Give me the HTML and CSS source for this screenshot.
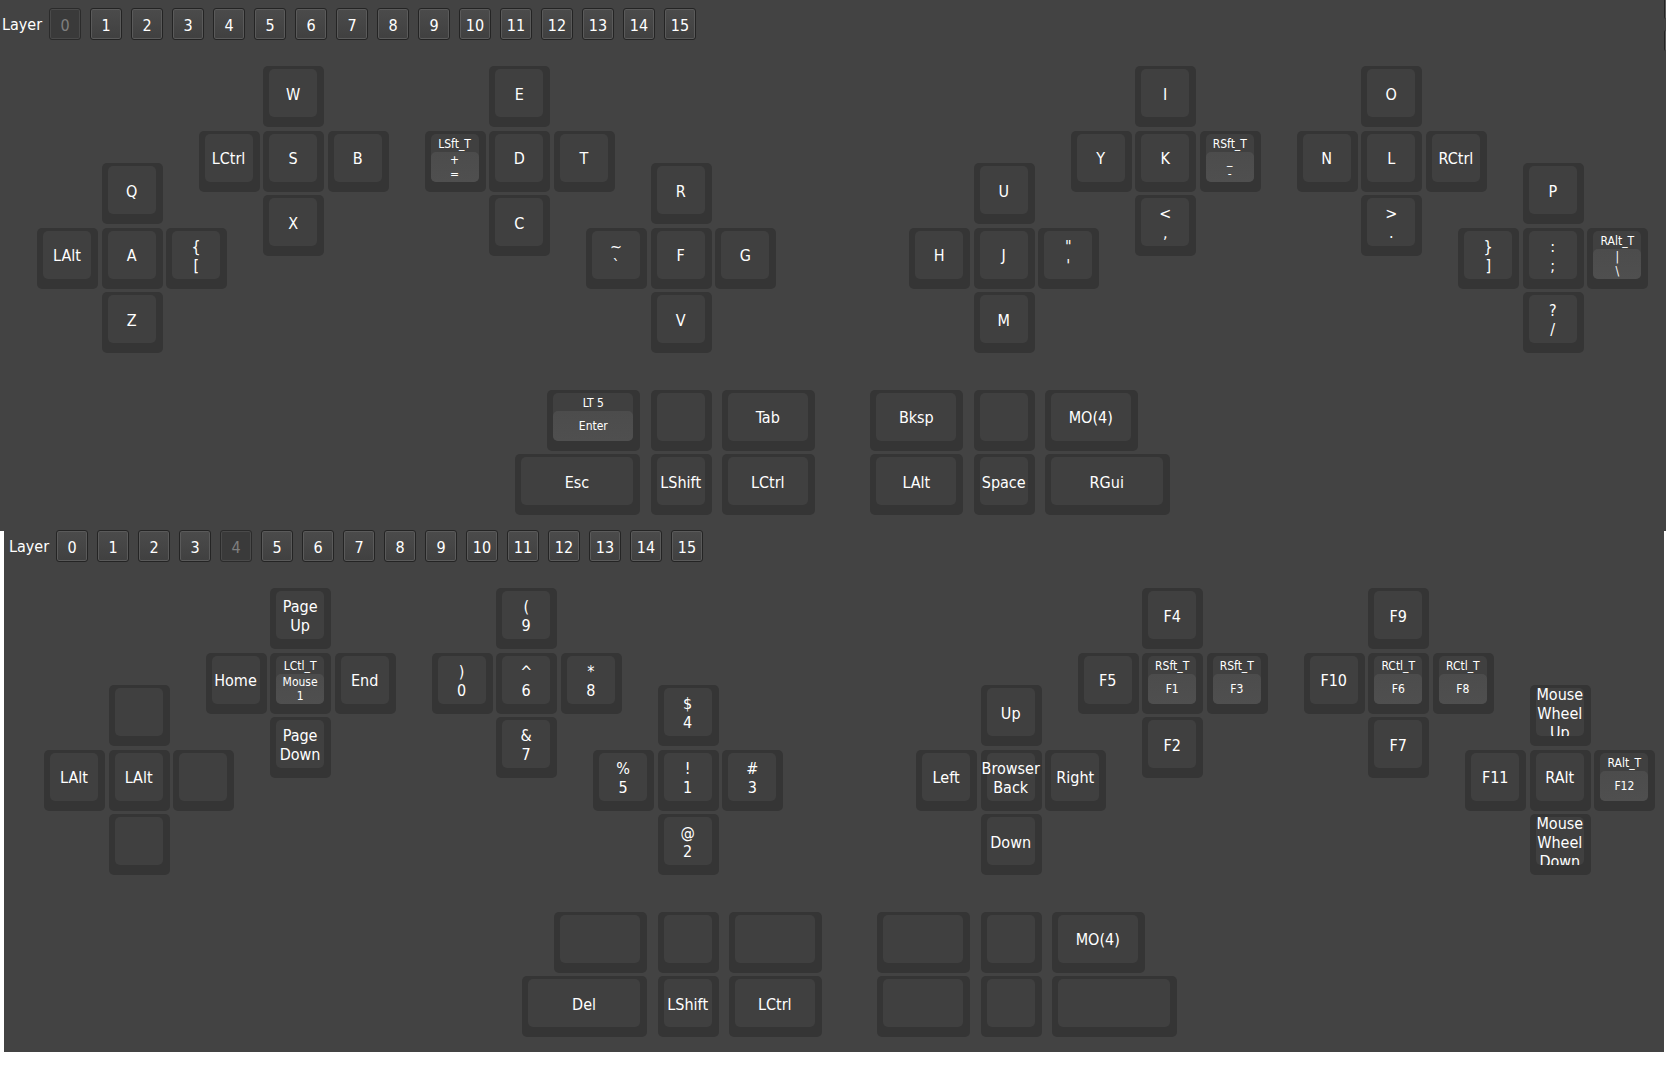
FILE: index.html
```html
<!DOCTYPE html>
<html lang="en">
<head>
<meta charset="utf-8">
<title>Keymap layers</title>
<link rel="stylesheet" href="styles.css">
</head>
<body>
<section class="panel panel-base">
  <nav class="layers">
    <span class="layers-label">Layer</span>
    <button class="layer" disabled>0</button>
    <button class="layer">1</button>
    <button class="layer">2</button>
    <button class="layer">3</button>
    <button class="layer">4</button>
    <button class="layer">5</button>
    <button class="layer">6</button>
    <button class="layer">7</button>
    <button class="layer">8</button>
    <button class="layer">9</button>
    <button class="layer">10</button>
    <button class="layer">11</button>
    <button class="layer">12</button>
    <button class="layer">13</button>
    <button class="layer">14</button>
    <button class="layer">15</button>
  </nav>
  <div class="edge edge-top"></div>
  <div class="edge edge-bottom"></div>
  <div class="board">
    <div class="cluster pinky-left">
      <button class="key north"><span class="cap">Q</span></button>
      <button class="key west"><span class="cap">LAlt</span></button>
      <button class="key center"><span class="cap">A</span></button>
      <button class="key east"><span class="cap">{<br>[</span></button>
      <button class="key south"><span class="cap">Z</span></button>
    </div>
    <div class="cluster ring-left">
      <button class="key north"><span class="cap">W</span></button>
      <button class="key west"><span class="cap">LCtrl</span></button>
      <button class="key center"><span class="cap">S</span></button>
      <button class="key east"><span class="cap">B</span></button>
      <button class="key south"><span class="cap">X</span></button>
    </div>
    <div class="cluster middle-left">
      <button class="key north"><span class="cap">E</span></button>
      <button class="key west"><span class="cap dual"><span class="hold">LSft_T</span><span class="tap">+<br>=</span></span></button>
      <button class="key center"><span class="cap">D</span></button>
      <button class="key east"><span class="cap">T</span></button>
      <button class="key south"><span class="cap">C</span></button>
    </div>
    <div class="cluster index-left">
      <button class="key north"><span class="cap">R</span></button>
      <button class="key west"><span class="cap">~<br>`</span></button>
      <button class="key center"><span class="cap">F</span></button>
      <button class="key east"><span class="cap">G</span></button>
      <button class="key south"><span class="cap">V</span></button>
    </div>
    <div class="cluster index-right">
      <button class="key north"><span class="cap">U</span></button>
      <button class="key west"><span class="cap">H</span></button>
      <button class="key center"><span class="cap">J</span></button>
      <button class="key east"><span class="cap">"<br>'</span></button>
      <button class="key south"><span class="cap">M</span></button>
    </div>
    <div class="cluster middle-right">
      <button class="key north"><span class="cap">I</span></button>
      <button class="key west"><span class="cap">Y</span></button>
      <button class="key center"><span class="cap">K</span></button>
      <button class="key east"><span class="cap dual"><span class="hold">RSft_T</span><span class="tap">_<br>-</span></span></button>
      <button class="key south"><span class="cap">&lt;<br>,</span></button>
    </div>
    <div class="cluster ring-right">
      <button class="key north"><span class="cap">O</span></button>
      <button class="key west"><span class="cap">N</span></button>
      <button class="key center"><span class="cap">L</span></button>
      <button class="key east"><span class="cap">RCtrl</span></button>
      <button class="key south"><span class="cap">&gt;<br>.</span></button>
    </div>
    <div class="cluster pinky-right">
      <button class="key north"><span class="cap">P</span></button>
      <button class="key west"><span class="cap">}<br>]</span></button>
      <button class="key center"><span class="cap">:<br>;</span></button>
      <button class="key east"><span class="cap dual"><span class="hold">RAlt_T</span><span class="tap">|<br>\</span></span></button>
      <button class="key south"><span class="cap">?<br>/</span></button>
    </div>
    <button class="key wide thumb-upper left-outer-upper"><span class="cap dual"><span class="hold">LT 5</span><span class="tap">Enter</span></span></button>
    <button class="key thumb-upper left-mid" aria-label="Empty"><span class="cap"></span></button>
    <button class="key wide thumb-upper left-inner"><span class="cap">Tab</span></button>
    <button class="key wide thumb-upper right-inner"><span class="cap">Bksp</span></button>
    <button class="key thumb-upper right-mid" aria-label="Empty"><span class="cap"></span></button>
    <button class="key wide thumb-upper right-outer"><span class="cap">MO(4)</span></button>
    <button class="key widest thumb-lower left-outer-lower"><span class="cap">Esc</span></button>
    <button class="key thumb-lower left-mid"><span class="cap">LShift</span></button>
    <button class="key wide thumb-lower left-inner"><span class="cap">LCtrl</span></button>
    <button class="key wide thumb-lower right-inner"><span class="cap">LAlt</span></button>
    <button class="key thumb-lower right-mid"><span class="cap">Space</span></button>
    <button class="key widest thumb-lower right-outer"><span class="cap">RGui</span></button>
  </div>
</section>
<section class="panel panel-nav">
  <nav class="layers">
    <span class="layers-label">Layer</span>
    <button class="layer">0</button>
    <button class="layer">1</button>
    <button class="layer">2</button>
    <button class="layer">3</button>
    <button class="layer" disabled>4</button>
    <button class="layer">5</button>
    <button class="layer">6</button>
    <button class="layer">7</button>
    <button class="layer">8</button>
    <button class="layer">9</button>
    <button class="layer">10</button>
    <button class="layer">11</button>
    <button class="layer">12</button>
    <button class="layer">13</button>
    <button class="layer">14</button>
    <button class="layer">15</button>
  </nav>
  <div class="board">
    <div class="cluster pinky-left">
      <button class="key north" aria-label="Empty"><span class="cap"></span></button>
      <button class="key west"><span class="cap">LAlt</span></button>
      <button class="key center"><span class="cap">LAlt</span></button>
      <button class="key east" aria-label="Empty"><span class="cap"></span></button>
      <button class="key south" aria-label="Empty"><span class="cap"></span></button>
    </div>
    <div class="cluster ring-left">
      <button class="key north"><span class="cap">Page<br>Up</span></button>
      <button class="key west"><span class="cap">Home</span></button>
      <button class="key center"><span class="cap dual"><span class="hold">LCtl_T</span><span class="tap">Mouse<br>1</span></span></button>
      <button class="key east"><span class="cap">End</span></button>
      <button class="key south"><span class="cap">Page<br>Down</span></button>
    </div>
    <div class="cluster middle-left">
      <button class="key north"><span class="cap">(<br>9</span></button>
      <button class="key west"><span class="cap">)<br>0</span></button>
      <button class="key center"><span class="cap">^<br>6</span></button>
      <button class="key east"><span class="cap">*<br>8</span></button>
      <button class="key south"><span class="cap">&amp;<br>7</span></button>
    </div>
    <div class="cluster index-left">
      <button class="key north"><span class="cap">$<br>4</span></button>
      <button class="key west"><span class="cap">%<br>5</span></button>
      <button class="key center"><span class="cap">!<br>1</span></button>
      <button class="key east"><span class="cap">#<br>3</span></button>
      <button class="key south"><span class="cap">@<br>2</span></button>
    </div>
    <div class="cluster index-right">
      <button class="key north"><span class="cap">Up</span></button>
      <button class="key west"><span class="cap">Left</span></button>
      <button class="key center"><span class="cap">Browser<br>Back</span></button>
      <button class="key east"><span class="cap">Right</span></button>
      <button class="key south"><span class="cap">Down</span></button>
    </div>
    <div class="cluster middle-right">
      <button class="key north"><span class="cap">F4</span></button>
      <button class="key west"><span class="cap">F5</span></button>
      <button class="key center"><span class="cap dual"><span class="hold">RSft_T</span><span class="tap">F1</span></span></button>
      <button class="key east"><span class="cap dual"><span class="hold">RSft_T</span><span class="tap">F3</span></span></button>
      <button class="key south"><span class="cap">F2</span></button>
    </div>
    <div class="cluster ring-right">
      <button class="key north"><span class="cap">F9</span></button>
      <button class="key west"><span class="cap">F10</span></button>
      <button class="key center"><span class="cap dual"><span class="hold">RCtl_T</span><span class="tap">F6</span></span></button>
      <button class="key east"><span class="cap dual"><span class="hold">RCtl_T</span><span class="tap">F8</span></span></button>
      <button class="key south"><span class="cap">F7</span></button>
    </div>
    <div class="cluster pinky-right">
      <button class="key north"><span class="cap">Mouse<br>Wheel<br>Up</span></button>
      <button class="key west"><span class="cap">F11</span></button>
      <button class="key center"><span class="cap">RAlt</span></button>
      <button class="key east"><span class="cap dual"><span class="hold">RAlt_T</span><span class="tap">F12</span></span></button>
      <button class="key south"><span class="cap">Mouse<br>Wheel<br>Down</span></button>
    </div>
    <button class="key wide thumb-upper left-outer-upper" aria-label="Empty"><span class="cap"></span></button>
    <button class="key thumb-upper left-mid" aria-label="Empty"><span class="cap"></span></button>
    <button class="key wide thumb-upper left-inner" aria-label="Empty"><span class="cap"></span></button>
    <button class="key wide thumb-upper right-inner" aria-label="Empty"><span class="cap"></span></button>
    <button class="key thumb-upper right-mid" aria-label="Empty"><span class="cap"></span></button>
    <button class="key wide thumb-upper right-outer"><span class="cap">MO(4)</span></button>
    <button class="key widest thumb-lower left-outer-lower"><span class="cap">Del</span></button>
    <button class="key thumb-lower left-mid"><span class="cap">LShift</span></button>
    <button class="key wide thumb-lower left-inner"><span class="cap">LCtrl</span></button>
    <button class="key wide thumb-lower right-inner" aria-label="Empty"><span class="cap"></span></button>
    <button class="key thumb-lower right-mid" aria-label="Empty"><span class="cap"></span></button>
    <button class="key widest thumb-lower right-outer" aria-label="Empty"><span class="cap"></span></button>
  </div>
</section>
</body>
</html>
```
FILE: styles.css
```css
* { box-sizing: border-box; }

body {
  margin: 0;
  background: #fff;
  color: #fff;
  font: 16px/19px "DejaVu Sans Condensed", "DejaVu Sans", sans-serif;
  font-stretch: condensed;
}

button {
  margin: 0;
  border: 0;
  padding: 0;
  color: inherit;
  font: inherit;
}

.panel {
  position: relative;
  background: #434343;
}

.panel-base { padding: 8px 14px 12px 2px; }

.panel-nav {
  margin: -1px 2px 0 4px;
  padding: 0 5px 11px 5px;
}

/* Layer selector */
.layers {
  display: flex;
  align-items: center;
  gap: 9px;
}

.layers-label {
  width: 38px;
  padding-top: 1px;
  white-space: nowrap;
}

.layer {
  width: 32px;
  height: 32px;
  padding-top: 2px;
  border: 1px solid #242424;
  border-radius: 3px;
  background: linear-gradient(#4b4b4b, #404040);
  box-shadow: inset 0 0 0 1px #5a5a5a;
}

.layer:disabled {
  border-color: #2b2b2b;
  background: #3a3a3a;
  box-shadow: inset 0 0 0 1px #4a4a4a;
  color: #7f7f7f;
}

/* Left borders of the controls cut off by the window's right side */
.edge {
  position: absolute;
  right: 0;
  width: 2px;
  border-left: 1px solid #242424;
  background: #5a5a5a;
}

.edge-top { top: 0; height: 19px; border-bottom-left-radius: 2px; }
.edge-bottom { top: 30px; height: 21px; border-radius: 2px 0 0 2px; }

/* Key matrix: columns are tenths of a key, rows are halves */
.board {
  display: grid;
  grid-template-columns: repeat(250, minmax(0, 1fr));
  grid-template-rows: repeat(14, minmax(0, 1fr));
  height: 453px;
  margin: 26px 0 0 35px;
}

.cluster {
  display: grid;
  grid-template-columns: repeat(3, minmax(0, 1fr));
  grid-template-rows: repeat(3, minmax(0, 1fr));
  pointer-events: none;
}

.pinky-left { grid-area: 4 / 1 / span 6 / span 30; }
.ring-left { grid-area: 1 / 26 / span 6 / span 30; }
.middle-left { grid-area: 1 / 61 / span 6 / span 30; }
.index-left { grid-area: 4 / 86 / span 6 / span 30; }
.index-right { grid-area: 4 / 136 / span 6 / span 30; }
.middle-right { grid-area: 1 / 161 / span 6 / span 30; }
.ring-right { grid-area: 1 / 196 / span 6 / span 30; }
.pinky-right { grid-area: 4 / 221 / span 6 / span 30; }

.north { grid-area: 1 / 2; }
.west { grid-area: 2 / 1; }
.center { grid-area: 2 / 2; }
.east { grid-area: 2 / 3; }
.south { grid-area: 3 / 2; }

.thumb-upper { grid-row: 11 / span 2; }
.thumb-lower { grid-row: 13 / span 2; }
.left-outer-upper { grid-column: 80 / span 15; }
.left-outer-lower { grid-column: 75 / span 20; }
.left-mid { grid-column: 96 / span 10; }
.left-inner { grid-column: 107 / span 15; }
.right-inner { grid-column: 130 / span 15; }
.right-mid { grid-column: 146 / span 10; }
.right-outer { grid-column: 157 / span 20; }

.key {
  display: flex;
  width: 61px;
  height: 61px;
  padding: 3px 7px 10px 6px;
  border-radius: 5px;
  background: #353535;
  pointer-events: auto;
}

.wide { width: 93px; }
.widest { width: 125px; }

/* Legends may run past the cap's sides, but not past its lower edge */
.cap {
  display: flex;
  flex: 1;
  align-items: center;
  justify-content: center;
  min-width: 0;
  height: 48px;
  padding-top: 2px;
  border-radius: 5px;
  background: #404040;
  overflow-x: visible;
  overflow-y: clip;
  text-align: center;
  white-space: nowrap;
}

.dual {
  flex-direction: column;
  align-items: stretch;
  justify-content: flex-start;
  padding-top: 0;
  font-size: 12px;
  line-height: 14px;
}

.hold {
  height: 18px;
  line-height: 20px;
}

.tap {
  display: flex;
  align-items: center;
  justify-content: center;
  height: 30px;
  padding-top: 1px;
  border-radius: 5px;
  background: linear-gradient(#4c4c4c, #4f4f4f);
}
```
